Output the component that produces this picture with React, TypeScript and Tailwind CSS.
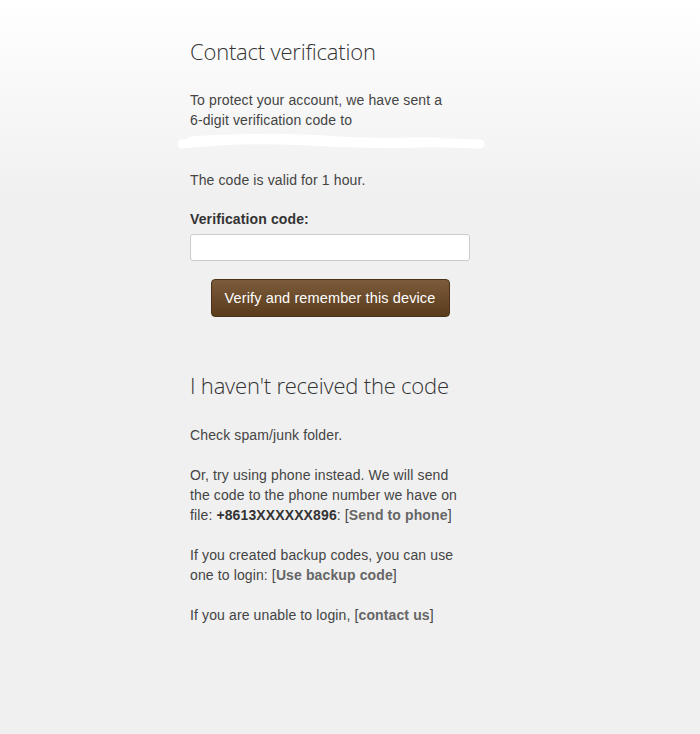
export default function App() {
  return (
    <div className="min-h-[734px] w-full bg-[linear-gradient(to_bottom,#ffffff_0px,#f0f0f0_200px,#f0f0f0_100%)] font-['Liberation_Sans',Arial,sans-serif] text-[14px] leading-[20px] tracking-[0.12px] text-[#444]">
      <div className="ml-[190px] w-[272px] pt-[35px]">
        <h1 className="font-['Open_Sans',sans-serif] font-light text-[22px] leading-[32px] text-[#333] tracking-[-0.2px]">
          Contact verification
        </h1>

        <p className="mt-[23px]">
          To protect your account, we have sent a 6&#8209;digit verification code to
        </p>
        <div className="relative h-[20px]">
          <span className="text-[#c8c8c8] text-[12px] tracking-[2px]">········ ····</span>
          <svg
            className="absolute left-[-12px] top-[1px]"
            width="310"
            height="22"
            viewBox="0 0 310 22"
          >
            <path
              d="M4 13 C 40 9, 90 8, 130 10 C 170 12, 200 14, 240 12 C 270 11, 290 13, 302 13"
              stroke="#ffffff"
              strokeWidth="9"
              strokeLinecap="round"
              fill="none"
            />
            <path
              d="M12 8 C 50 5, 110 4, 160 8 C 190 10, 230 9, 260 9"
              stroke="#ffffff"
              strokeWidth="5"
              strokeLinecap="round"
              fill="none"
            />
          </svg>
        </div>

        <p className="mt-[20px]">The code is valid for 1 hour.</p>

        <label className="mt-[19px] block font-bold text-[#333]">
          Verification code:
        </label>
        <input
          type="text"
          className="mt-[5px] block h-[27px] w-[280px] rounded-[3px] border border-[#cccccc] bg-white px-2 outline-none"
        />

        <div className="mt-[18px] flex w-[280px] justify-center">
          <button className="h-[38px] w-[239px] rounded-[4px] border border-[#4a3219] bg-[linear-gradient(to_bottom,#7b5b3a,#5a3b1c)] text-[14.5px] text-white">
            Verify and remember this device
          </button>
        </div>

        <h2 className="mt-[52px] font-['Open_Sans',sans-serif] font-light text-[22px] leading-[32px] text-[#333] tracking-[-0.2px]">
          I haven't received the code
        </h2>

        <p className="mt-[24px]">Check spam/junk folder.</p>

        <p className="mt-[20px]">
          Or, try using phone instead. We will send the code to the phone number
          we have on file: <b className="text-[#333]">+8613XXXXXX896</b>:{" "}
          <span>
            [<b className="text-[#666]">Send to phone</b>]
          </span>
        </p>

        <p className="mt-[20px]">
          If you created backup codes, you can use one to login:{" "}
          <span>
            [<b className="text-[#666]">Use backup code</b>]
          </span>
        </p>

        <p className="mt-[20px]">
          If you are unable to login,{" "}
          <span>
            [<b className="text-[#666]">contact us</b>]
          </span>
        </p>
      </div>
    </div>
  );
}
